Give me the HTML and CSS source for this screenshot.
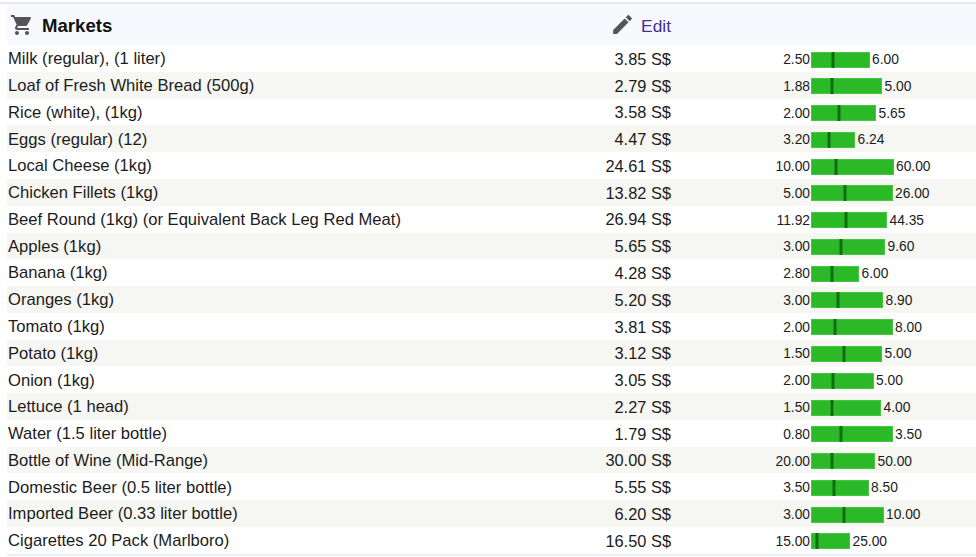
FILE: index.html
```html
<!DOCTYPE html>
<html lang="en">
<head>
<meta charset="utf-8">
<title>Markets</title>
<link rel="stylesheet" href="styles.css">
</head>
<body>
<div class="topline"></div>
<section class="panel">
  <header class="head">
    <div class="title">
      <svg class="cart" viewBox="0 0 24 24"><path d="M7 18c-1.1 0-1.99.9-1.99 2S5.9 22 7 22s2-.9 2-2-.9-2-2-2zM1 2v2h2l3.6 7.59-1.35 2.45c-.16.28-.25.61-.25.96 0 1.1.9 2 2 2h12v-2H7.42c-.14 0-.25-.11-.25-.25l.03-.12.9-1.63h7.45c.75 0 1.41-.41 1.75-1.03l3.58-6.47c.08-.14.12-.31.12-.48 0-.55-.45-1-1-1H5.21l-.94-2H1zm16 16c-1.1 0-1.99.9-1.99 2s.89 2 1.99 2 2-.9 2-2-.9-2-2-2z"/></svg>
      <h1>Markets</h1>
    </div>
    <a class="edit" href="#">
      <svg class="pencil" viewBox="0 0 24 24"><path d="M3 17.25V21h3.75L17.81 9.94l-3.75-3.75L3 17.25zM20.71 7.04c.39-.39.39-1.02 0-1.41l-2.34-2.34c-.39-.39-1.02-.39-1.41 0l-1.83 1.83 3.75 3.75 1.83-1.83z"/></svg>
      <span class="edit-label">Edit</span>
    </a>
  </header>
  <div class="row"><span class="name">Milk (regular), (1 liter)</span><span class="price">3.85 S$</span><span class="min">2.50</span><span class="range"><span class="bar" style="width:58.5px"><i class="mark" style="left:22px"></i></span><span class="max">6.00</span></span></div>
  <div class="row"><span class="name">Loaf of Fresh White Bread (500g)</span><span class="price">2.79 S$</span><span class="min">1.88</span><span class="range"><span class="bar" style="width:71px"><i class="mark" style="left:21px"></i></span><span class="max">5.00</span></span></div>
  <div class="row"><span class="name">Rice (white), (1kg)</span><span class="price">3.58 S$</span><span class="min">2.00</span><span class="range"><span class="bar" style="width:65px"><i class="mark" style="left:27.5px"></i></span><span class="max">5.65</span></span></div>
  <div class="row"><span class="name">Eggs (regular) (12)</span><span class="price">4.47 S$</span><span class="min">3.20</span><span class="range"><span class="bar" style="width:44px"><i class="mark" style="left:18px"></i></span><span class="max">6.24</span></span></div>
  <div class="row"><span class="name">Local Cheese (1kg)</span><span class="price">24.61 S$</span><span class="min">10.00</span><span class="range"><span class="bar" style="width:82.5px"><i class="mark" style="left:24.5px"></i></span><span class="max">60.00</span></span></div>
  <div class="row"><span class="name">Chicken Fillets (1kg)</span><span class="price">13.82 S$</span><span class="min">5.00</span><span class="range"><span class="bar" style="width:81.5px"><i class="mark" style="left:33.5px"></i></span><span class="max">26.00</span></span></div>
  <div class="row"><span class="name">Beef Round (1kg) (or Equivalent Back Leg Red Meat)</span><span class="price">26.94 S$</span><span class="min">11.92</span><span class="range"><span class="bar" style="width:76px"><i class="mark" style="left:34.5px"></i></span><span class="max">44.35</span></span></div>
  <div class="row"><span class="name">Apples (1kg)</span><span class="price">5.65 S$</span><span class="min">3.00</span><span class="range"><span class="bar" style="width:74px"><i class="mark" style="left:29.5px"></i></span><span class="max">9.60</span></span></div>
  <div class="row"><span class="name">Banana (1kg)</span><span class="price">4.28 S$</span><span class="min">2.80</span><span class="range"><span class="bar" style="width:48px"><i class="mark" style="left:21px"></i></span><span class="max">6.00</span></span></div>
  <div class="row"><span class="name">Oranges (1kg)</span><span class="price">5.20 S$</span><span class="min">3.00</span><span class="range"><span class="bar" style="width:72px"><i class="mark" style="left:26.5px"></i></span><span class="max">8.90</span></span></div>
  <div class="row"><span class="name">Tomato (1kg)</span><span class="price">3.81 S$</span><span class="min">2.00</span><span class="range"><span class="bar" style="width:81.5px"><i class="mark" style="left:24px"></i></span><span class="max">8.00</span></span></div>
  <div class="row"><span class="name">Potato (1kg)</span><span class="price">3.12 S$</span><span class="min">1.50</span><span class="range"><span class="bar" style="width:71px"><i class="mark" style="left:32.5px"></i></span><span class="max">5.00</span></span></div>
  <div class="row"><span class="name">Onion (1kg)</span><span class="price">3.05 S$</span><span class="min">2.00</span><span class="range"><span class="bar" style="width:62.5px"><i class="mark" style="left:22px"></i></span><span class="max">5.00</span></span></div>
  <div class="row"><span class="name">Lettuce (1 head)</span><span class="price">2.27 S$</span><span class="min">1.50</span><span class="range"><span class="bar" style="width:70px"><i class="mark" style="left:21px"></i></span><span class="max">4.00</span></span></div>
  <div class="row"><span class="name">Water (1.5 liter bottle)</span><span class="price">1.79 S$</span><span class="min">0.80</span><span class="range"><span class="bar" style="width:81.5px"><i class="mark" style="left:29.5px"></i></span><span class="max">3.50</span></span></div>
  <div class="row"><span class="name">Bottle of Wine (Mid-Range)</span><span class="price">30.00 S$</span><span class="min">20.00</span><span class="range"><span class="bar" style="width:64px"><i class="mark" style="left:21px"></i></span><span class="max">50.00</span></span></div>
  <div class="row"><span class="name">Domestic Beer (0.5 liter bottle)</span><span class="price">5.55 S$</span><span class="min">3.50</span><span class="range"><span class="bar" style="width:57.5px"><i class="mark" style="left:23px"></i></span><span class="max">8.50</span></span></div>
  <div class="row"><span class="name">Imported Beer (0.33 liter bottle)</span><span class="price">6.20 S$</span><span class="min">3.00</span><span class="range"><span class="bar" style="width:72.5px"><i class="mark" style="left:32.5px"></i></span><span class="max">10.00</span></span></div>
  <div class="row"><span class="name">Cigarettes 20 Pack (Marlboro)</span><span class="price">16.50 S$</span><span class="min">15.00</span><span class="range"><span class="bar" style="width:39px"><i class="mark" style="left:6px"></i></span><span class="max">25.00</span></span></div>
</section>
</body>
</html>
```

FILE: styles.css
```css
html, body {
  margin: 0;
  padding: 0;
  background: #fff;
  overflow: hidden;
}
body {
  font-family: "Liberation Sans", Arial, sans-serif;
  color: #1c1c1c;
}
.topline {
  height: 2px;
  margin-top: 2px;
  background: #e9e9ec;
}
.panel {
  margin-left: 7px;
  border-bottom: 2px solid #e6effa;
}
.head {
  display: grid;
  grid-template-columns: 564px 100px;
  height: 41.2px;
  align-items: center;
  background: #f8f9ff;
}
.title {
  display: flex;
  align-items: center;
  gap: 8px;
  padding-left: 3px;
}
.cart {
  width: 24px;
  height: 24px;
  fill: #555;
  flex: none;
}
.title h1 {
  margin: 0;
  font-size: 18.6px;
  font-weight: 700;
  color: #111;
  position: relative;
  top: 1px;
}
.edit {
  display: flex;
  justify-content: flex-end;
  align-items: center;
  gap: 6px;
  font-size: 17.4px;
  color: #3f3190;
  text-decoration: none;
}
.pencil {
  width: 25px;
  height: 25px;
  fill: #555;
  flex: none;
}
.edit-label {
  position: relative;
  top: 2px;
}
.row {
  display: grid;
  grid-template-columns: 564px 100px 139px 166px;
  height: 26.78px;
  align-items: center;
  font-size: 16.4px;
}
.row:nth-of-type(even) {
  background: #f6f6f2;
}
.name {
  padding-left: 1px;
  font-size: 16.6px;
  position: relative;
  top: 0.8px;
}
.price {
  text-align: right;
  position: relative;
  top: 0.8px;
}
.min {
  text-align: right;
  font-size: 13.8px;
  position: relative;
  top: 1px;
}
.range {
  display: flex;
  align-items: center;
  padding-left: 1px;
  gap: 2.5px;
  position: relative;
  top: 1px;
}
.bar {
  position: relative;
  height: 16px;
  box-sizing: border-box;
  background: #2cb928;
  border: 1px solid #46c743;
}
.mark {
  position: absolute;
  top: -1px;
  bottom: -1px;
  width: 3px;
  margin-left: -1px;
  transform: translateX(-50%);
  background: #0f6e10;
}
.max {
  font-size: 13.8px;
}
```
